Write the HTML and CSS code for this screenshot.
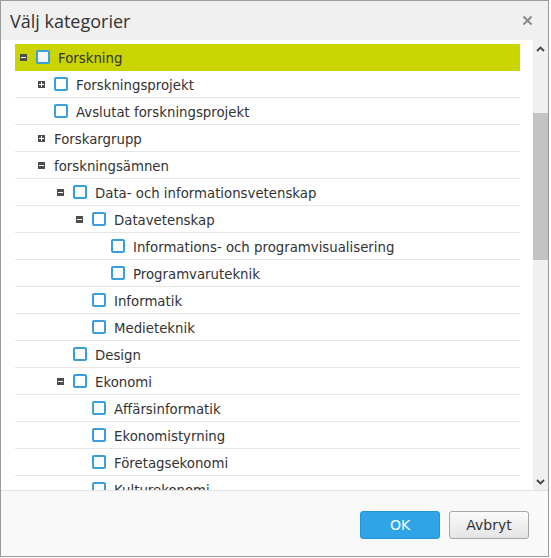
FILE: index.html
```html
<!DOCTYPE html>
<html lang="sv">
<head>
    <meta charset="UTF-8">
    <meta name="viewport" content="width=device-width, initial-scale=1.0">
    <title>Välj kategorier</title>
    <link rel="stylesheet" href="styles.css">
</head>
<body>
    <div class="dialog">
        <header class="dialog-header">
            <h1>Välj kategorier</h1>
            <svg class="close" width="11" height="11" viewBox="0 0 11 11">
                <path d="M1.5 1.5 L9.5 9.5 M9.5 1.5 L1.5 9.5" stroke="#8a8a8a" stroke-width="2" fill="none"/>
            </svg>
        </header>

        <div class="dialog-main">
            <div class="tree">
                <div class="node depth-1 selected"><span class="toggle minus"></span><span class="check"></span><span class="label">Forskning</span></div>
                <div class="node depth-2"><span class="toggle plus"></span><span class="check"></span><span class="label">Forskningsprojekt</span></div>
                <div class="node depth-2"><span class="toggle empty"></span><span class="check"></span><span class="label">Avslutat forskningsprojekt</span></div>
                <div class="node depth-2"><span class="toggle plus"></span><span class="label">Forskargrupp</span></div>
                <div class="node depth-2"><span class="toggle minus"></span><span class="label">forskningsämnen</span></div>
                <div class="node depth-3"><span class="toggle minus"></span><span class="check"></span><span class="label">Data- och informationsvetenskap</span></div>
                <div class="node depth-4"><span class="toggle minus"></span><span class="check"></span><span class="label">Datavetenskap</span></div>
                <div class="node depth-5"><span class="toggle empty"></span><span class="check"></span><span class="label">Informations- och programvisualisering</span></div>
                <div class="node depth-5"><span class="toggle empty"></span><span class="check"></span><span class="label">Programvaruteknik</span></div>
                <div class="node depth-4"><span class="toggle empty"></span><span class="check"></span><span class="label">Informatik</span></div>
                <div class="node depth-4"><span class="toggle empty"></span><span class="check"></span><span class="label">Medieteknik</span></div>
                <div class="node depth-3"><span class="toggle empty"></span><span class="check"></span><span class="label">Design</span></div>
                <div class="node depth-3"><span class="toggle minus"></span><span class="check"></span><span class="label">Ekonomi</span></div>
                <div class="node depth-4"><span class="toggle empty"></span><span class="check"></span><span class="label">Affärsinformatik</span></div>
                <div class="node depth-4"><span class="toggle empty"></span><span class="check"></span><span class="label">Ekonomistyrning</span></div>
                <div class="node depth-4"><span class="toggle empty"></span><span class="check"></span><span class="label">Företagsekonomi</span></div>
                <div class="node depth-4"><span class="toggle empty"></span><span class="check"></span><span class="label">Kulturekonomi</span></div>
            </div>

            <div class="scrollbar">
                <div class="sb-btn">
                    <svg width="9" height="6" viewBox="0 0 9 6"><path d="M1 5 L4.5 1.5 L8 5" stroke="#444" stroke-width="1.8" fill="none"/></svg>
                </div>
                <div class="sb-track"><div class="sb-thumb"></div></div>
                <div class="sb-btn">
                    <svg width="9" height="6" viewBox="0 0 9 6"><path d="M1 1 L4.5 4.5 L8 1" stroke="#444" stroke-width="1.8" fill="none"/></svg>
                </div>
            </div>
        </div>

        <footer class="dialog-footer">
            <button class="btn btn-primary">OK</button>
            <button class="btn">Avbryt</button>
        </footer>
    </div>
</body>
</html>
```

FILE: styles.css
```css
body {
    margin: 0;
    background: #fff;
    font-family: "DejaVu Sans", Verdana, sans-serif;
}

.dialog {
    width: 547px;
    height: 555px;
    border: 1px solid #9a9a9a;
    display: flex;
    flex-direction: column;
    background: #fff;
}

.dialog-header {
    height: 39px;
    background: #f0f0f0;
    display: flex;
    align-items: center;
    justify-content: space-between;
    padding: 0 15px 0 9px;
}

.dialog-header h1 {
    margin: 0;
    font-family: "Open Sans", sans-serif;
    font-size: 18px;
    font-weight: normal;
    color: #333;
}

.close {
    display: block;
}

.dialog-main {
    height: 450px;
    display: flex;
}

.tree {
    flex: 1;
    overflow: hidden;
    padding: 4px 13px 0 14px;
}

.node {
    height: 26px;
    border-bottom: 1px solid #e6e6e6;
    display: flex;
    align-items: center;
    font-size: 13.3px;
    color: #333;
    white-space: nowrap;
}

.node.selected {
    background: #c9d400;
    border-bottom-color: #c9d400;
}

.label {
    padding-top: 2px;
}

.depth-1 { padding-left: 5px; }
.depth-2 { padding-left: 23px; }
.depth-3 { padding-left: 42px; }
.depth-4 { padding-left: 61px; }
.depth-5 { padding-left: 80px; }

.toggle {
    width: 7px;
    height: 7px;
    margin-right: 9px;
    background: #4d4d4d;
    position: relative;
    flex-shrink: 0;
}

.toggle.empty {
    background: none;
}

.toggle.minus::before,
.toggle.plus::before {
    content: "";
    position: absolute;
    left: 1px;
    top: 3px;
    width: 5px;
    height: 1px;
    background: #fff;
}

.toggle.plus::after {
    content: "";
    position: absolute;
    left: 3px;
    top: 1px;
    width: 1px;
    height: 5px;
    background: #fff;
}

.check {
    width: 10px;
    height: 10px;
    border: 2px solid #3a9ddc;
    border-radius: 2px;
    background: #fff;
    margin-right: 8px;
    flex-shrink: 0;
}

.selected .check {
    background: linear-gradient(#ffffff, #e4f1fb);
}

.scrollbar {
    width: 15px;
    background: #f0f0f0;
    display: flex;
    flex-direction: column;
}

.sb-btn {
    height: 17px;
    display: flex;
    align-items: center;
    justify-content: center;
}

.sb-track {
    flex: 1;
}

.sb-thumb {
    margin-top: 56px;
    height: 147px;
    background: #c3c3c3;
}

.dialog-footer {
    flex: 1;
    background: #f9f9f9;
    border-top: 1px solid #e2e2e2;
    display: flex;
    justify-content: flex-end;
    align-items: flex-start;
    gap: 9px;
    padding: 20px 19px 0 0;
}

.btn {
    width: 80px;
    height: 28px;
    font-family: "DejaVu Sans", Verdana, sans-serif;
    font-size: 14px;
    color: #333;
    border: 1px solid #a6a6a6;
    border-radius: 3px;
    background: linear-gradient(#fbfbfb, #e4e4e4);
    padding: 0;
}

.btn-primary {
    background: #2fa5e8;
    border-color: #2396d8;
    color: #fff;
}
```
